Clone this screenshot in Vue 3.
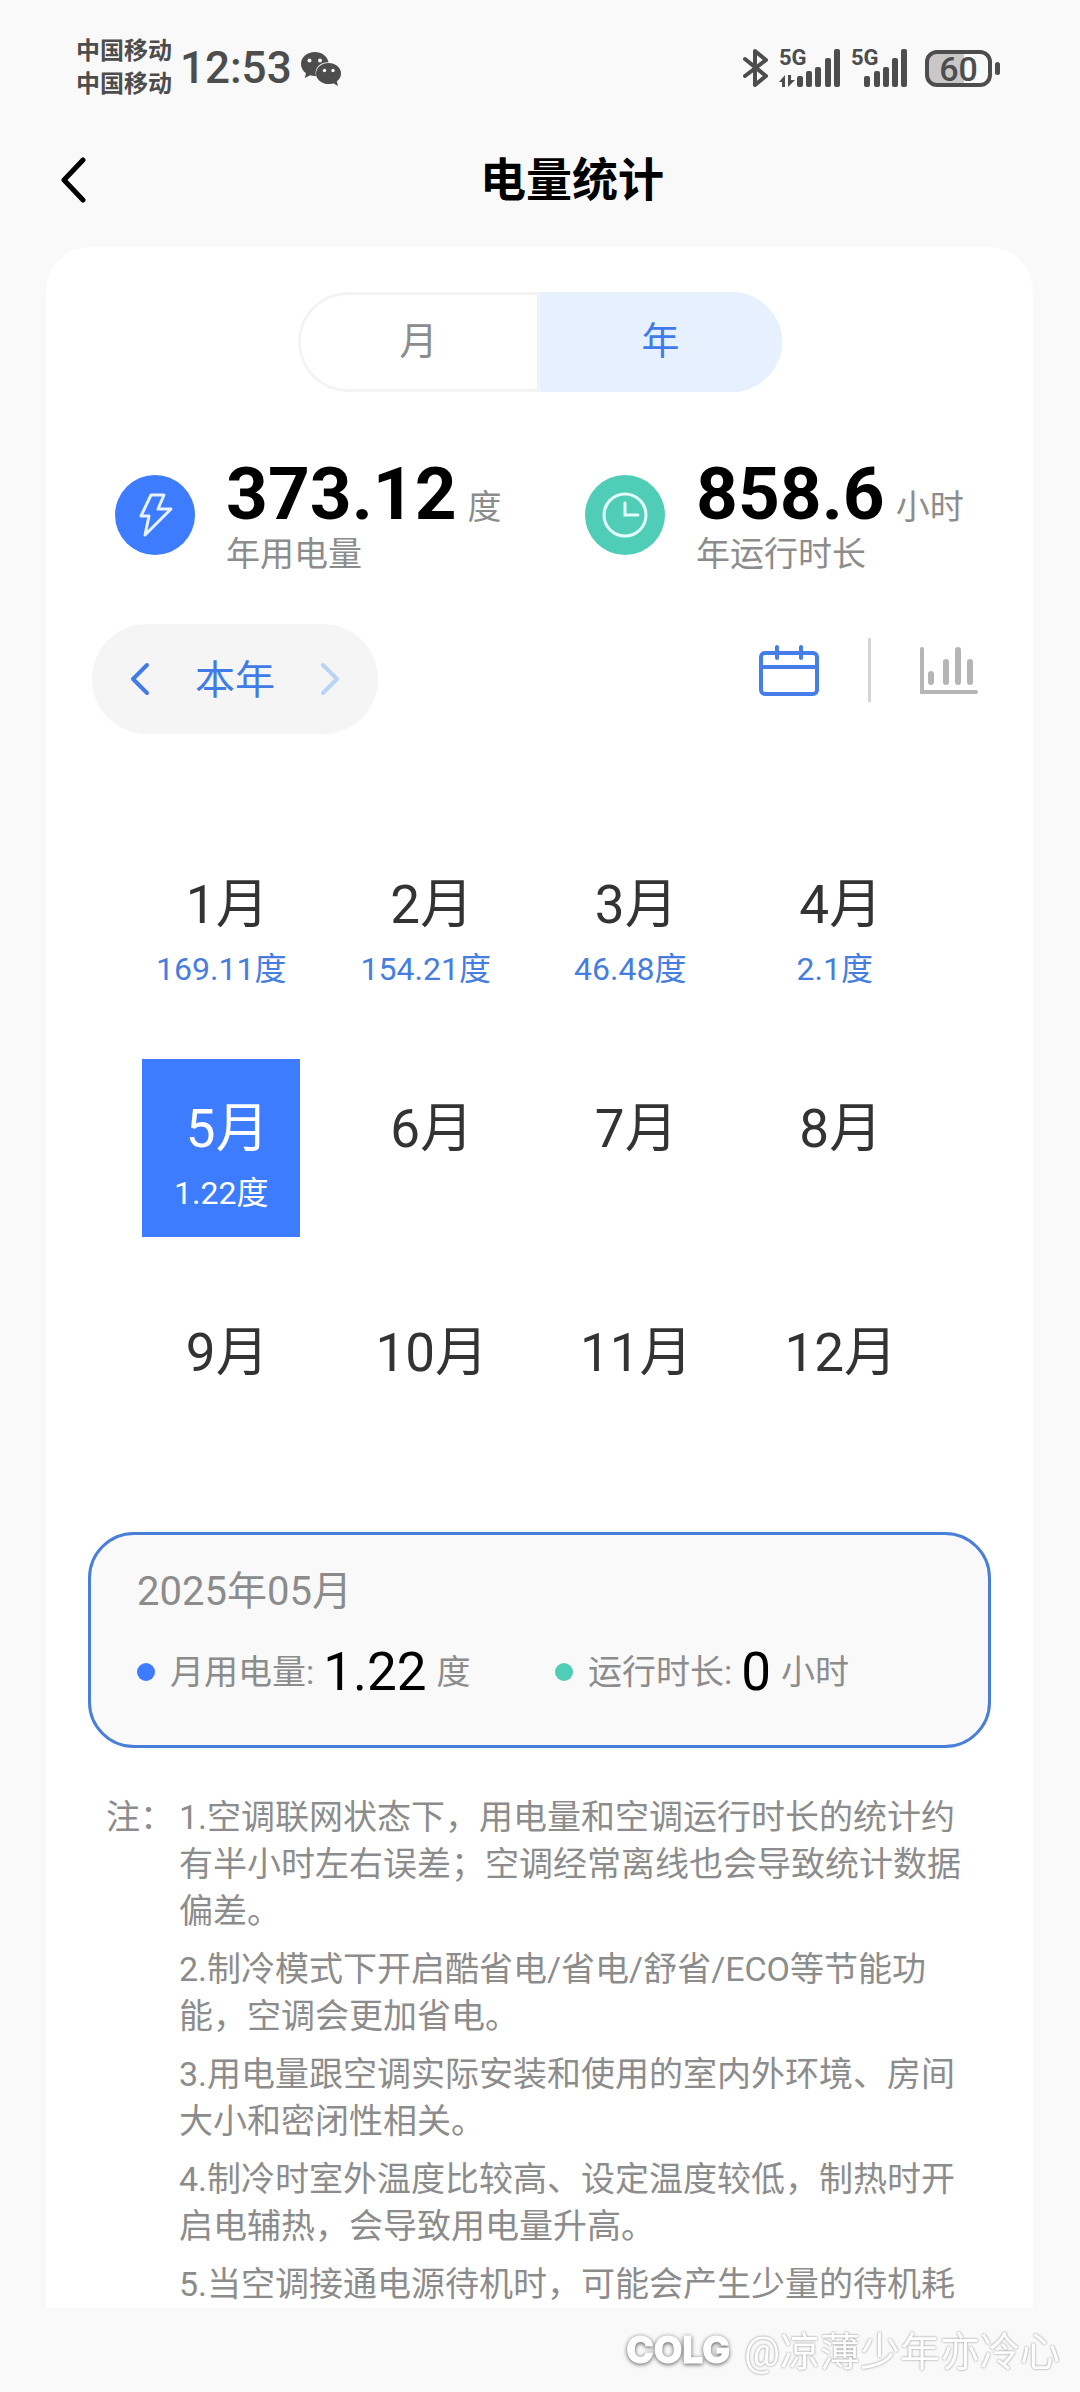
<script setup>
import { computed, ref } from 'vue'

const period = ref('year')
const view = ref('calendar')
const selected = ref(5)

const usage = { 1: '169.11', 2: '154.21', 3: '46.48', 4: '2.1', 5: '1.22' }
const months = Array.from({ length: 12 }, (_, i) => ({ id: i + 1, usage: usage[i + 1] }))
const selectedTitle = computed(() => `2025年${String(selected.value).padStart(2, '0')}月`)
const selectedUsage = computed(() => usage[selected.value] ?? '0')

const notes = [
  '1.空调联网状态下，用电量和空调运行时长的统计约有半小时左右误差；空调经常离线也会导致统计数据偏差。',
  '2.制冷模式下开启酷省电/省电/舒省/ECO等节能功能，空调会更加省电。',
  '3.用电量跟空调实际安装和使用的室内外环境、房间大小和密闭性相关。',
  '4.制冷时室外温度比较高、设定温度较低，制热时开启电辅热，会导致用电量升高。',
  '5.当空调接通电源待机时，可能会产生少量的待机耗',
]
</script>

<template>
  <div class="page">
    <div class="status">
      <div class="carriers"><span>中国移动</span><span>中国移动</span></div>
      <span class="time">12:53</span>
      <svg class="wechat" width="42" height="36" viewBox="0 0 42 36" aria-hidden="true">
        <path fill="#4d4d4d" d="M15 1C7 1 1 6.200 1 13c0 4 2 7 5 9.300L4.800 27l5.400-2.800c1.600.5 3.200.7 4.800.7h1C14 17 20 11 28.500 11.200 27.300 5 21.500 1 15 1Z" />
        <ellipse cx="28.500" cy="22.500" rx="12.500" ry="10.600" fill="#4d4d4d" />
        <path fill="#4d4d4d" d="m32 31.500 6 3.500-1.500-6Z" />
        <g fill="#f9f9f9"><circle cx="9.500" cy="9.500" r="2" /><circle cx="20" cy="9.500" r="2" /><circle cx="24.500" cy="19.500" r="1.700" /><circle cx="33" cy="19.500" r="1.700" /></g>
      </svg>
      <div class="indicators">
        <svg width="26" height="38" viewBox="0 0 26 38" fill="none" stroke="#4d4d4d" stroke-width="4" stroke-linejoin="round" stroke-linecap="round" aria-hidden="true">
          <path d="m2 10 21 17-11 9V2l11 9L2 27" />
        </svg>
        <div class="signal">
          <svg width="62" height="38" viewBox="0 0 62 38" fill="#4d4d4d" aria-hidden="true">
            <rect x="18" y="27" width="6" height="11" rx="2" /><rect x="27" y="22" width="6" height="16" rx="2" /><rect x="36" y="18" width="6" height="20" rx="2" /><rect x="46" y="9" width="6" height="29" rx="2" /><rect x="55" y="0" width="6" height="38" rx="2" />
            <path d="M0 33 6 26v12H3v-5ZM9 26h3v5h4l-7 7Z" />
          </svg>
          <span>5G</span>
        </div>
        <div class="signal">
          <svg width="58" height="38" viewBox="0 0 58 38" fill="#4d4d4d" aria-hidden="true">
            <rect x="13" y="27" width="6" height="11" rx="2" /><rect x="23" y="22" width="6" height="16" rx="2" /><rect x="32" y="18" width="6" height="20" rx="2" /><rect x="41" y="9" width="6" height="29" rx="2" /><rect x="50" y="0" width="6" height="38" rx="2" />
          </svg>
          <span>5G</span>
        </div>
        <div class="battery"><span>60</span></div>
      </div>
    </div>

    <header class="header">
      <button class="back" aria-label="返回">
        <svg width="26" height="48" viewBox="0 0 26 48" fill="none" stroke="#000" stroke-width="5" stroke-linecap="round" stroke-linejoin="round">
          <path d="M23 4 4 24l19 20" />
        </svg>
      </button>
      <h1>电量统计</h1>
    </header>

    <main class="card">
      <div class="segment">
        <button :class="{ on: period === 'month' }" @click="period = 'month'">月</button>
        <button :class="{ on: period === 'year' }" @click="period = 'year'">年</button>
      </div>

      <section class="stats">
        <div class="stat">
          <svg class="badge" width="82" height="82" viewBox="0 0 82 82" fill="none" aria-hidden="true">
            <circle cx="41" cy="41" r="40" fill="#3d7bff" />
            <path d="M37 21h13l-6 14h13L31 61l4-19h-8Z" stroke="#e8f2ff" stroke-width="3" stroke-linejoin="round" />
          </svg>
          <div>
            <p class="figure"><strong>373.12</strong><span>度</span></p>
            <p class="caption">年用电量</p>
          </div>
        </div>
        <div class="stat">
          <svg class="badge" width="82" height="82" viewBox="0 0 82 82" fill="none" aria-hidden="true">
            <circle cx="41" cy="41" r="40" fill="#50cdb7" />
            <g stroke="#e2fff9" stroke-width="3" stroke-linecap="round"><circle cx="41" cy="41" r="21" /><path d="M41 29v12h13" /></g>
          </svg>
          <div>
            <p class="figure"><strong>858.6</strong><span>小时</span></p>
            <p class="caption">年运行时长</p>
          </div>
        </div>
      </section>

      <div class="toolbar">
        <div class="picker">
          <button aria-label="上一年">
            <svg width="20" height="34" viewBox="0 0 20 34" fill="none" stroke="#417be8" stroke-width="4" stroke-linecap="round" stroke-linejoin="round"><path d="M17 3 3 17l14 14" /></svg>
          </button>
          <span>本年</span>
          <button aria-label="下一年" disabled>
            <svg width="20" height="34" viewBox="0 0 20 34" fill="none" stroke="#b9d4f7" stroke-width="4" stroke-linecap="round" stroke-linejoin="round"><path d="m3 3 14 14L3 31" /></svg>
          </button>
        </div>
        <div class="views">
          <button aria-label="日历" @click="view = 'calendar'">
            <svg width="62" height="54" viewBox="0 0 62 54" fill="none" stroke="#467ee9" stroke-width="4" stroke-linecap="round"><rect x="3" y="10" width="56" height="41" rx="4" /><path d="M4 24h54M19 4v11M43 4v11" /></svg>
          </button>
          <i class="rule"></i>
          <button aria-label="柱状图" @click="view = 'chart'">
            <svg width="60" height="54" viewBox="0 0 60 54" fill="none" stroke="#b5b5b5" stroke-linecap="round"><path stroke-width="4" d="M3 6v43h54" /><path stroke-width="6" d="M12 31v8M27 19v20M39 7v32M51 19v20" /></svg>
          </button>
        </div>
      </div>

      <div class="months">
        <button v-for="m in months" :key="m.id" class="month" :class="{ active: m.id === selected }" @click="selected = m.id">
          <span class="name">{{ m.id }}月</span>
          <span v-if="m.usage" class="usage">{{ m.usage }}度</span>
        </button>
      </div>

      <section class="summary">
        <h2>{{ selectedTitle }}</h2>
        <div class="totals">
          <p><i class="dot blue"></i><span>月用电量:</span><b>{{ selectedUsage }}</b><span>度</span></p>
          <p><i class="dot green"></i><span>运行时长:</span><b>0</b><span>小时</span></p>
        </div>
      </section>

      <section class="notes">
        <span>注：</span>
        <div class="note-list">
          <p v-for="note in notes" :key="note">{{ note }}</p>
        </div>
      </section>
    </main>

    <footer class="credit"><span class="brand">COLG</span><span class="author">@凉薄少年亦冷心</span></footer>
  </div>
</template>

<style>
body {
  margin: 0;
  background: #f9f9f9;
}
</style>

<style scoped>
.page {
  font-family: Roboto, "Noto Sans CJK SC", sans-serif;
  color: #8c8c8c;
  font-size: 34px;
}
h1, h2, p {
  margin: 0;
  font-weight: 400;
}
button {
  margin: 0;
  padding: 0;
  border: 0;
  background: none;
  color: inherit;
  font: inherit;
  cursor: pointer;
}
svg {
  display: block;
}

.status {
  display: flex;
  align-items: center;
  height: 136px;
  padding: 0 88px 0 76px;
  color: #4d4d4d;
}
.carriers {
  display: flex;
  flex-direction: column;
  font-size: 24px;
  line-height: 33px;
  font-weight: 700;
}
.time {
  margin-left: 8px;
  font-size: 44px;
  font-weight: 500;
}
.wechat {
  margin: 2px 0 0 8px;
}
.indicators {
  display: flex;
  align-items: center;
  gap: 10px;
  margin-left: auto;
}
.signal {
  position: relative;
}
.signal span {
  position: absolute;
  left: 0;
  top: 0;
  font-size: 22px;
  line-height: 18px;
  font-weight: 700;
}
.battery {
  position: relative;
  box-sizing: border-box;
  width: 67px;
  height: 37px;
  margin-left: 6px;
  border: 4px solid #4d4d4d;
  border-radius: 12px;
  background: linear-gradient(90deg, #c8c8c8 60%, transparent 60%);
  font-size: 34px;
  line-height: 30px;
  text-align: center;
  font-weight: 500;
}
.battery::after {
  content: "";
  position: absolute;
  right: -12px;
  top: 8px;
  width: 5px;
  height: 13px;
  border-radius: 3px;
  background: #4d4d4d;
}

.header {
  display: flex;
  align-items: center;
  height: 87px;
  padding: 0 22px 24px 60px;
}
.header h1 {
  flex: 1;
  color: #000;
  font-size: 46px;
  line-height: 64px;
  font-weight: 700;
  text-align: center;
}

.card {
  margin: 0 47px 0 46px;
  padding: 45px 42px 0;
  border-radius: 44px 44px 0 0;
  background: #fff;
}
.segment {
  display: flex;
  box-sizing: border-box;
  width: 484px;
  height: 100px;
  margin: 0 auto;
  border-radius: 50px;
  overflow: hidden;
  font-size: 38px;
}
.segment button {
  flex: 1;
  padding-bottom: 9px;
  border: 3px solid #f3f3f3;
}
.segment button:first-child {
  border-radius: 50px 0 0 50px;
}
.segment button.on {
  border-color: #e6f0ff;
  background: #e6f0ff;
  color: #417be8;
}

.stats {
  display: grid;
  grid-template-columns: 470px 1fr;
  margin: 66px 0 0 26px;
}
.stat {
  display: flex;
  align-items: flex-start;
  gap: 30px;
  white-space: nowrap;
}
.badge {
  margin-top: 16px;
}
.figure {
  display: flex;
  align-items: baseline;
  gap: 11px;
  line-height: 72px;
}
.figure strong {
  color: #000;
  font-size: 73px;
  font-weight: 700;
}
.figure span {
  line-height: 40px;
}
.caption {
  line-height: 48px;
}

.toolbar {
  display: flex;
  align-items: center;
  justify-content: space-between;
  margin: 46px 12px 0 4px;
}
.picker {
  display: flex;
  align-items: center;
  justify-content: space-between;
  box-sizing: border-box;
  width: 286px;
  height: 110px;
  padding: 0 38px;
  border-radius: 55px;
  background: #f5f5f6;
  color: #417be8;
  font-size: 40px;
}
.picker span {
  padding-bottom: 5px;
}
.views {
  display: flex;
  align-items: center;
  gap: 48px;
  padding-bottom: 18px;
}
.rule {
  width: 3px;
  height: 64px;
  background: #d4d4d4;
}

.months {
  display: grid;
  grid-template-columns: repeat(4, 1fr);
  row-gap: 46px;
  justify-items: center;
  margin: 101px 54px 0 31px;
}
.month {
  display: flex;
  flex-direction: column;
  align-items: center;
  box-sizing: border-box;
  width: 158px;
  height: 178px;
  padding-top: 32px;
}
.name {
  padding-left: 12px;
  color: #333;
  font-size: 53px;
  line-height: 76px;
}
.usage {
  color: #467ee0;
  font-size: 32px;
  line-height: 52px;
}
.month.active {
  background: #3d7bff;
}
.month.active span {
  color: #fff;
}

.summary {
  box-sizing: border-box;
  height: 216px;
  margin-top: 71px;
  padding: 27px 46px 0;
  border: 3px solid #4a7fd9;
  border-radius: 46px;
  background: #f9f9f9;
}
.summary h2 {
  font-size: 40px;
  line-height: 60px;
}
.totals {
  display: grid;
  grid-template-columns: 418px 1fr;
}
.totals p {
  display: flex;
  align-items: center;
  line-height: 100px;
  white-space: nowrap;
}
.totals b {
  margin: 0 10px 0 9px;
  color: #000;
  font-size: 53px;
  font-weight: 400;
}
.dot {
  width: 18px;
  height: 18px;
  margin-right: 15px;
  border-radius: 50%;
}
.blue {
  background: #3d7bff;
}
.green {
  background: #50cdb7;
}

.notes {
  display: flex;
  margin: 46px 16px 0 18px;
  line-height: 47px;
}
.notes > span {
  flex: 0 0 73px;
}
.note-list {
  display: flex;
  flex-direction: column;
  gap: 11px;
}

.credit {
  display: flex;
  align-items: center;
  justify-content: flex-end;
  gap: 14px;
  height: 82px;
  padding-right: 20px;
  color: #fff;
  white-space: nowrap;
}
.brand {
  font-family: Inter, sans-serif;
  font-size: 37px;
  font-weight: 800;
  -webkit-text-stroke: 1px #fff;
  filter: drop-shadow(0 1px 2px #555);
}
.author {
  font-size: 40px;
  filter: drop-shadow(0 0 1px #888);
}
</style>
